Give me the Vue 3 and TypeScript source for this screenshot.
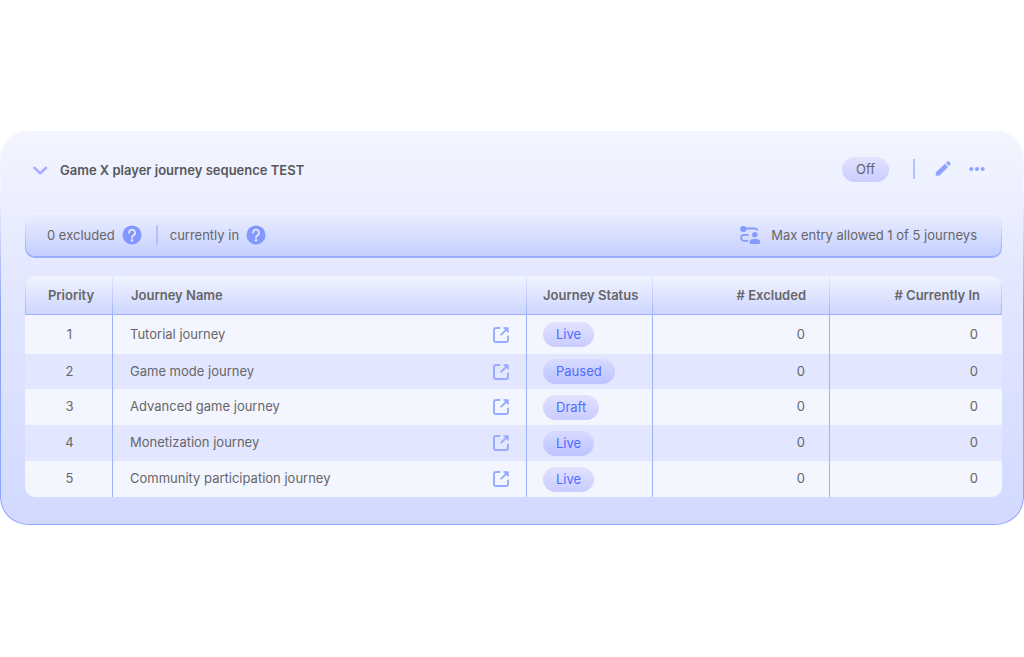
<script setup lang="ts">
import { ref } from 'vue'

interface Journey {
  priority: number
  name: string
  status: 'Live' | 'Paused' | 'Draft'
  excluded: number
  current: number
}

const open = ref(true)
const journeys: Journey[] = [
  { priority: 1, name: 'Tutorial journey', status: 'Live', excluded: 0, current: 0 },
  { priority: 2, name: 'Game mode journey', status: 'Paused', excluded: 0, current: 0 },
  { priority: 3, name: 'Advanced game journey', status: 'Draft', excluded: 0, current: 0 },
  { priority: 4, name: 'Monetization journey', status: 'Live', excluded: 0, current: 0 },
  { priority: 5, name: 'Community participation journey', status: 'Live', excluded: 0, current: 0 },
]
</script>

<template>
  <main class="page">
    <section class="card">
      <header class="head">
        <button class="icon-btn toggle" type="button" aria-label="Toggle sequence" :aria-expanded="open" @click="open = !open">
          <svg width="16" height="16" viewBox="0 0 16 16" fill="none" stroke="#a9adff" stroke-width="2.6" stroke-linecap="round" stroke-linejoin="round">
            <path d="M2.4 5.8 8.200 11.400l5.800-5.600" />
          </svg>
        </button>
        <h1 class="title">Game X player journey sequence TEST</h1>
        <button class="pill off" type="button">Off</button>
        <span class="divider"></span>
        <button class="icon-btn edit" type="button" aria-label="Edit">
          <svg width="18" height="18" viewBox="0 0 18 18" fill="#8ea2ff">
            <path d="M10.9 3.7 14.1 6.9 6 15q-.8.8-1.800.8H3q-1.300 0-1.300-1.300v-.9q0-1 .8-1.800z" />
            <path d="m11.9 2.700.8-.8q1.500-1.300 2.900.1l.3.300q1.400 1.400 0 2.900l-.8.800z" />
          </svg>
        </button>
        <button class="icon-btn more" type="button" aria-label="More actions">
          <svg width="16" height="6" viewBox="0 0 16 6" fill="#8ea2ff">
            <circle cx="2.3" cy="3" r="2" /><circle cx="8" cy="3" r="2" /><circle cx="13.7" cy="3" r="2" />
          </svg>
        </button>
      </header>

      <div v-show="open" class="content">
        <div class="bar">
          <span>0 excluded</span>
          <button class="icon-btn help" type="button" aria-label="About excluded">
            <svg width="20" height="20" viewBox="0 0 20 20" fill="none">
              <circle cx="10" cy="10" r="9.5" fill="#8298ff" />
              <path d="M7 7.700a3.050 3.050 0 1 1 4.600 2.600c-1.100.7-1.600 1.200-1.600 2.200" stroke="#e6ebff" stroke-width="1.8" stroke-linecap="round" />
              <circle cx="10" cy="15.3" r="1.2" fill="#e6ebff" />
            </svg>
          </button>
          <span class="divider"></span>
          <span>currently in</span>
          <button class="icon-btn help" type="button" aria-label="About currently in">
            <svg width="20" height="20" viewBox="0 0 20 20" fill="none">
              <circle cx="10" cy="10" r="9.5" fill="#8298ff" />
              <path d="M7 7.700a3.050 3.050 0 1 1 4.600 2.600c-1.100.7-1.600 1.200-1.600 2.200" stroke="#e6ebff" stroke-width="1.8" stroke-linecap="round" />
              <circle cx="10" cy="15.3" r="1.2" fill="#e6ebff" />
            </svg>
          </button>
          <span class="limit">
            <svg width="22" height="20" viewBox="0 0 22 20" fill="#859bff">
              <circle cx="4.3" cy="4" r="3.1" />
              <path d="M5 3.500h10.500q2.300 0 2.700 1.300M8.300 15.800H5.100a3 3 0 0 1 0-6h4" fill="none" stroke="#859bff" stroke-width="1.8" stroke-linecap="round" />
              <circle cx="15.8" cy="9.7" r="2.7" />
              <path d="M10.500 17.500q0-3.500 3.500-3.500h3.700q3.500 0 3.500 3.500 0 1.500-1.500 1.500H12q-1.500 0-1.500-1.500z" />
            </svg>
            Max entry allowed 1 of 5 journeys
          </span>
        </div>

        <table class="table">
          <colgroup>
            <col class="c-priority" /><col /><col class="c-status" /><col class="c-excluded" /><col class="c-current" />
          </colgroup>
          <thead>
            <tr>
              <th scope="col" class="center">Priority</th>
              <th scope="col" class="name">Journey Name</th>
              <th scope="col">Journey Status</th>
              <th scope="col" class="num">#&nbsp;Excluded</th>
              <th scope="col" class="num last">#&nbsp;Currently In</th>
            </tr>
          </thead>
          <tbody>
            <tr v-for="j in journeys" :key="j.priority">
              <td class="center">{{ j.priority }}</td>
              <td class="name">
                <div class="name-row">
                  <span class="label">{{ j.name }}</span>
                  <a class="link" href="#" :aria-label="'Open ' + j.name">
                    <svg width="18" height="18" viewBox="0 0 18 18" fill="none" stroke="#97abff" stroke-width="1.9" stroke-linecap="round" stroke-linejoin="round">
                      <path d="M7.500 2H4Q2 2 2 4v10q0 2 2 2h10q2 0 2-2v-3.500" />
                      <path d="m9.300 8.700 5-5" />
                      <path d="M12 1.800h4.200V6z" fill="#97abff" stroke-width="1" />
                    </svg>
                  </a>
                </div>
              </td>
              <td><span class="pill">{{ j.status }}</span></td>
              <td class="num">{{ j.excluded }}</td>
              <td class="num last">{{ j.current }}</td>
            </tr>
          </tbody>
        </table>
      </div>
    </section>
  </main>
</template>

<style>
body {
  margin: 0;
  background: #fff;
}
</style>

<style scoped>
.page {
  box-sizing: border-box;
  min-height: 100vh;
  display: flex;
  flex-direction: column;
  justify-content: center;
  padding-bottom: 1px;
  font-family: Inter, "Liberation Sans", sans-serif;
  font-size: 13px;
  line-height: 20px;
  color: #666668;
}
.card {
  border: 1px solid transparent;
  border-radius: 28px;
  padding: 0 21px 27px 24px;
  background:
    linear-gradient(#f3f5ff, #e3e8ff 38%, #d1d9ff) padding-box,
    linear-gradient(#f3f5ff 15%, #8da2f5 45%, #8fa5ff) border-box;
}
.head {
  display: flex;
  align-items: center;
  height: 74px;
  padding: 0 17px 0 7px;
}
.icon-btn {
  display: flex;
  padding: 0;
  border: 0;
  background: none;
  cursor: pointer;
}
.toggle {
  padding-top: 2px;
}
.title {
  flex: 1;
  margin: 0 0 0 12px;
  padding-top: 2px;
  font-size: 13px;
  font-weight: 600;
  line-height: 20px;
  color: #58585b;
}
.pill {
  display: inline-block;
  padding: 0 13px;
  border: 0;
  border-radius: 13px;
  font: inherit;
  line-height: 25px;
  color: #4e6dff;
  background: linear-gradient(#e3e2ff, #c9ccff);
  vertical-align: middle;
}
tbody tr:nth-child(even) .pill {
  background: linear-gradient(#d8dbff, #bbc3ff);
}
.pill.off {
  padding: 0 14px;
  color: #666668;
}
.divider {
  width: 2px;
  height: 20px;
  background: #b5c1ff;
}
.head .divider {
  margin-left: 24px;
}
.edit {
  margin-left: 19px;
}
.more {
  margin-left: 17px;
}
.bar {
  display: flex;
  align-items: center;
  box-sizing: border-box;
  height: 45px;
  margin: 7px 0 18px;
  padding: 0 24px 0 21px;
  border: 1px solid transparent;
  border-bottom-width: 2px;
  border-radius: 10px;
  background:
    linear-gradient(#ebeeff, #c4cfff) padding-box,
    linear-gradient(#f5f7ff, #9aaeff 80%) border-box;
}
.help {
  margin-left: 7px;
}
.bar .divider {
  margin: 0 12px 0 14px;
}
.limit {
  display: flex;
  align-items: center;
  gap: 10px;
  margin-left: auto;
}
.table {
  width: 100%;
  table-layout: fixed;
  border-collapse: separate;
  border-spacing: 0;
  border-radius: 10px;
  overflow: hidden;
}
.c-priority { width: 88px; }
.c-status { width: 126px; }
.c-excluded { width: 177px; }
.c-current { width: 172px; }
th,
td {
  box-sizing: border-box;
  padding: 0 0 0 16px;
  text-align: left;
}
th {
  height: 39px;
  border-bottom: 1px solid #9fb2ff;
  font-weight: 600;
  background:
    linear-gradient(#e4e8ff, #9fb2ff) right / 1px 100% no-repeat,
    linear-gradient(#f2f4ff, #cdd6ff);
}
th:first-child {
  background:
    linear-gradient(#e4e8ff, #9fb2ff) right / 1px 100% no-repeat,
    linear-gradient(#e4e8ff, #9fb2ff) left / 1px 100% no-repeat,
    linear-gradient(#f2f4ff, #cdd6ff);
}
td {
  height: 36px;
  border-right: 1px solid #9fb2ff;
  background: #f3f5ff;
}
tbody tr:first-child td {
  height: 39px;
}
tbody tr:nth-child(2) td {
  height: 35px;
}
tbody tr:nth-child(even) td {
  background: #e2e7ff;
}
td.last {
  border-right: 0;
}
.center {
  padding: 0 0 0 4px;
  text-align: center;
}
td.center {
  padding: 0 0 2px 2px;
}
.name {
  padding: 0 16px 0 18px;
}
td.name {
  padding-left: 17px;
}
.name-row {
  display: flex;
  align-items: center;
  justify-content: space-between;
}
.label {
  padding-bottom: 2px;
}
.link {
  display: flex;
}
.num {
  padding: 0 24px 0 0;
  text-align: right;
}
td.num {
  padding-bottom: 2px;
}
th.last {
  padding-right: 22px;
}
</style>
